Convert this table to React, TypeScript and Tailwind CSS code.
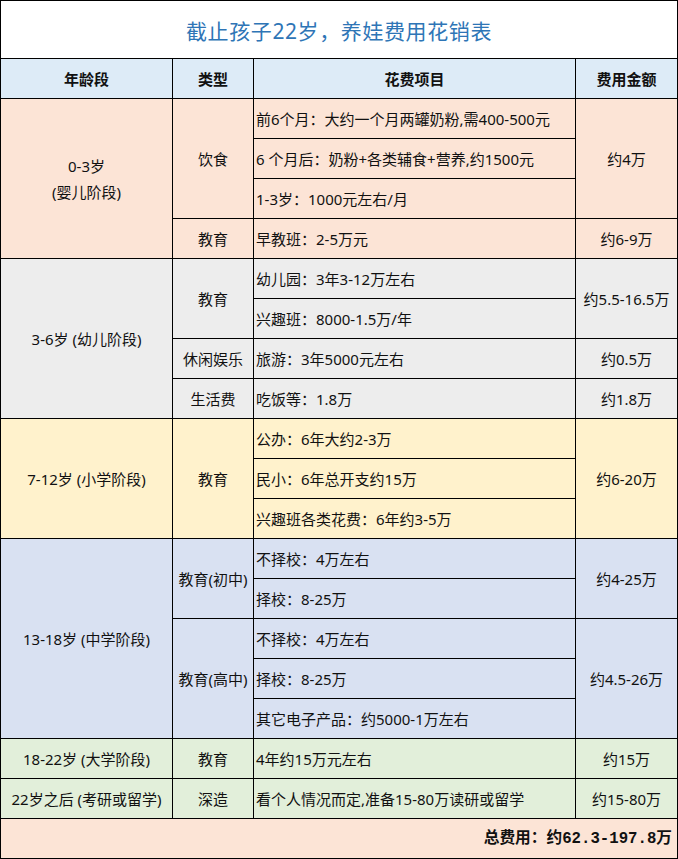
import React from "react";

const PEACH = "bg-[#fce4d6]";
const GRAY = "bg-[#ededed]";
const YELLOW = "bg-[#fff2cc]";
const BLUE = "bg-[#d9e1f2]";
const GREEN = "bg-[#e2efda]";

function C({
  className = "",
  children,
}: {
  className?: string;
  children?: React.ReactNode;
}) {
  return (
    <div className={`flex items-center justify-center text-center ${className}`}>
      {children}
    </div>
  );
}

function I({ className = "", children }: { className?: string; children?: React.ReactNode }) {
  return (
    <div className={`flex items-center justify-start pl-[2px] whitespace-nowrap ${className}`}>
      {children}
    </div>
  );
}

export default function App() {
  return (
    <div
      className="w-[678px] h-[859px] bg-white text-[15px] leading-[20px] text-[#111]"
      style={{ fontFamily: '"Noto Sans", "Noto Sans CJK SC", sans-serif' }}
    >
      <div className="grid w-[678px] grid-cols-[171px_80px_321px_101px] grid-rows-[57px_39px_repeat(19,39px)] gap-px bg-black p-px">
        {/* title */}
        <C className="col-span-4 bg-white text-[21px] tracking-[0.6px] text-[#2e75b6] pt-[3px]">
          截止孩子22岁，养娃费用花销表
        </C>
        {/* header */}
        <C className="bg-[#ddebf7] font-bold">年龄段</C>
        <C className="bg-[#ddebf7] font-bold">类型</C>
        <C className="bg-[#ddebf7] font-bold">花费项目</C>
        <C className="bg-[#ddebf7] font-bold">费用金额</C>

        {/* 0-3 */}
        <C className={`row-span-4 ${PEACH} flex-col leading-[26px]`}>
          <span>0-3岁</span>
          <span>(婴儿阶段)</span>
        </C>
        <C className={`row-span-3 ${PEACH}`}>饮食</C>
        <I className={PEACH}>前6个月：大约一个月两罐奶粉,需400-500元</I>
        <C className={`row-span-3 ${PEACH}`}>约4万</C>
        <I className={PEACH}>6 个月后：奶粉+各类辅食+营养,约1500元</I>
        <I className={PEACH}>1-3岁：1000元左右/月</I>
        <C className={PEACH}>教育</C>
        <I className={PEACH}>早教班：2-5万元</I>
        <C className={PEACH}>约6-9万</C>

        {/* 3-6 */}
        <C className={`row-span-4 ${GRAY}`}>3-6岁 (幼儿阶段)</C>
        <C className={`row-span-2 ${GRAY}`}>教育</C>
        <I className={GRAY}>幼儿园：3年3-12万左右</I>
        <C className={`row-span-2 ${GRAY}`}>约5.5-16.5万</C>
        <I className={GRAY}>兴趣班：8000-1.5万/年</I>
        <C className={GRAY}>休闲娱乐</C>
        <I className={GRAY}>旅游：3年5000元左右</I>
        <C className={GRAY}>约0.5万</C>
        <C className={GRAY}>生活费</C>
        <I className={GRAY}>吃饭等：1.8万</I>
        <C className={GRAY}>约1.8万</C>

        {/* 7-12 */}
        <C className={`row-span-3 ${YELLOW}`}>7-12岁 (小学阶段)</C>
        <C className={`row-span-3 ${YELLOW}`}>教育</C>
        <I className={YELLOW}>公办：6年大约2-3万</I>
        <C className={`row-span-3 ${YELLOW}`}>约6-20万</C>
        <I className={YELLOW}>民小：6年总开支约15万</I>
        <I className={YELLOW}>兴趣班各类花费：6年约3-5万</I>

        {/* 13-18 */}
        <C className={`row-span-5 ${BLUE}`}>13-18岁 (中学阶段)</C>
        <C className={`row-span-2 ${BLUE}`}>教育(初中)</C>
        <I className={BLUE}>不择校：4万左右</I>
        <C className={`row-span-2 ${BLUE}`}>约4-25万</C>
        <I className={BLUE}>择校：8-25万</I>
        <C className={`row-span-3 ${BLUE}`}>教育(高中)</C>
        <I className={BLUE}>不择校：4万左右</I>
        <C className={`row-span-3 ${BLUE}`}>约4.5-26万</C>
        <I className={BLUE}>择校：8-25万</I>
        <I className={BLUE}>其它电子产品：约5000-1万左右</I>

        {/* 18-22 */}
        <C className={GREEN}>18-22岁 (大学阶段)</C>
        <C className={GREEN}>教育</C>
        <I className={GREEN}>4年约15万元左右</I>
        <C className={GREEN}>约15万</C>

        {/* 22+ */}
        <C className={GREEN}>22岁之后 (考研或留学)</C>
        <C className={GREEN}>深造</C>
        <I className={GREEN}>看个人情况而定,准备15-80万读研或留学</I>
        <C className={GREEN}>约15-80万</C>

        {/* total */}
        <div
          className={`col-span-4 ${PEACH} flex items-center justify-end pr-[5px] font-bold text-[15.7px]`}
          style={{ fontFamily: '"Liberation Mono", "Noto Sans CJK SC", monospace' }}
        >
          总费用：约62.3-197.8万
        </div>
      </div>
    </div>
  );
}
